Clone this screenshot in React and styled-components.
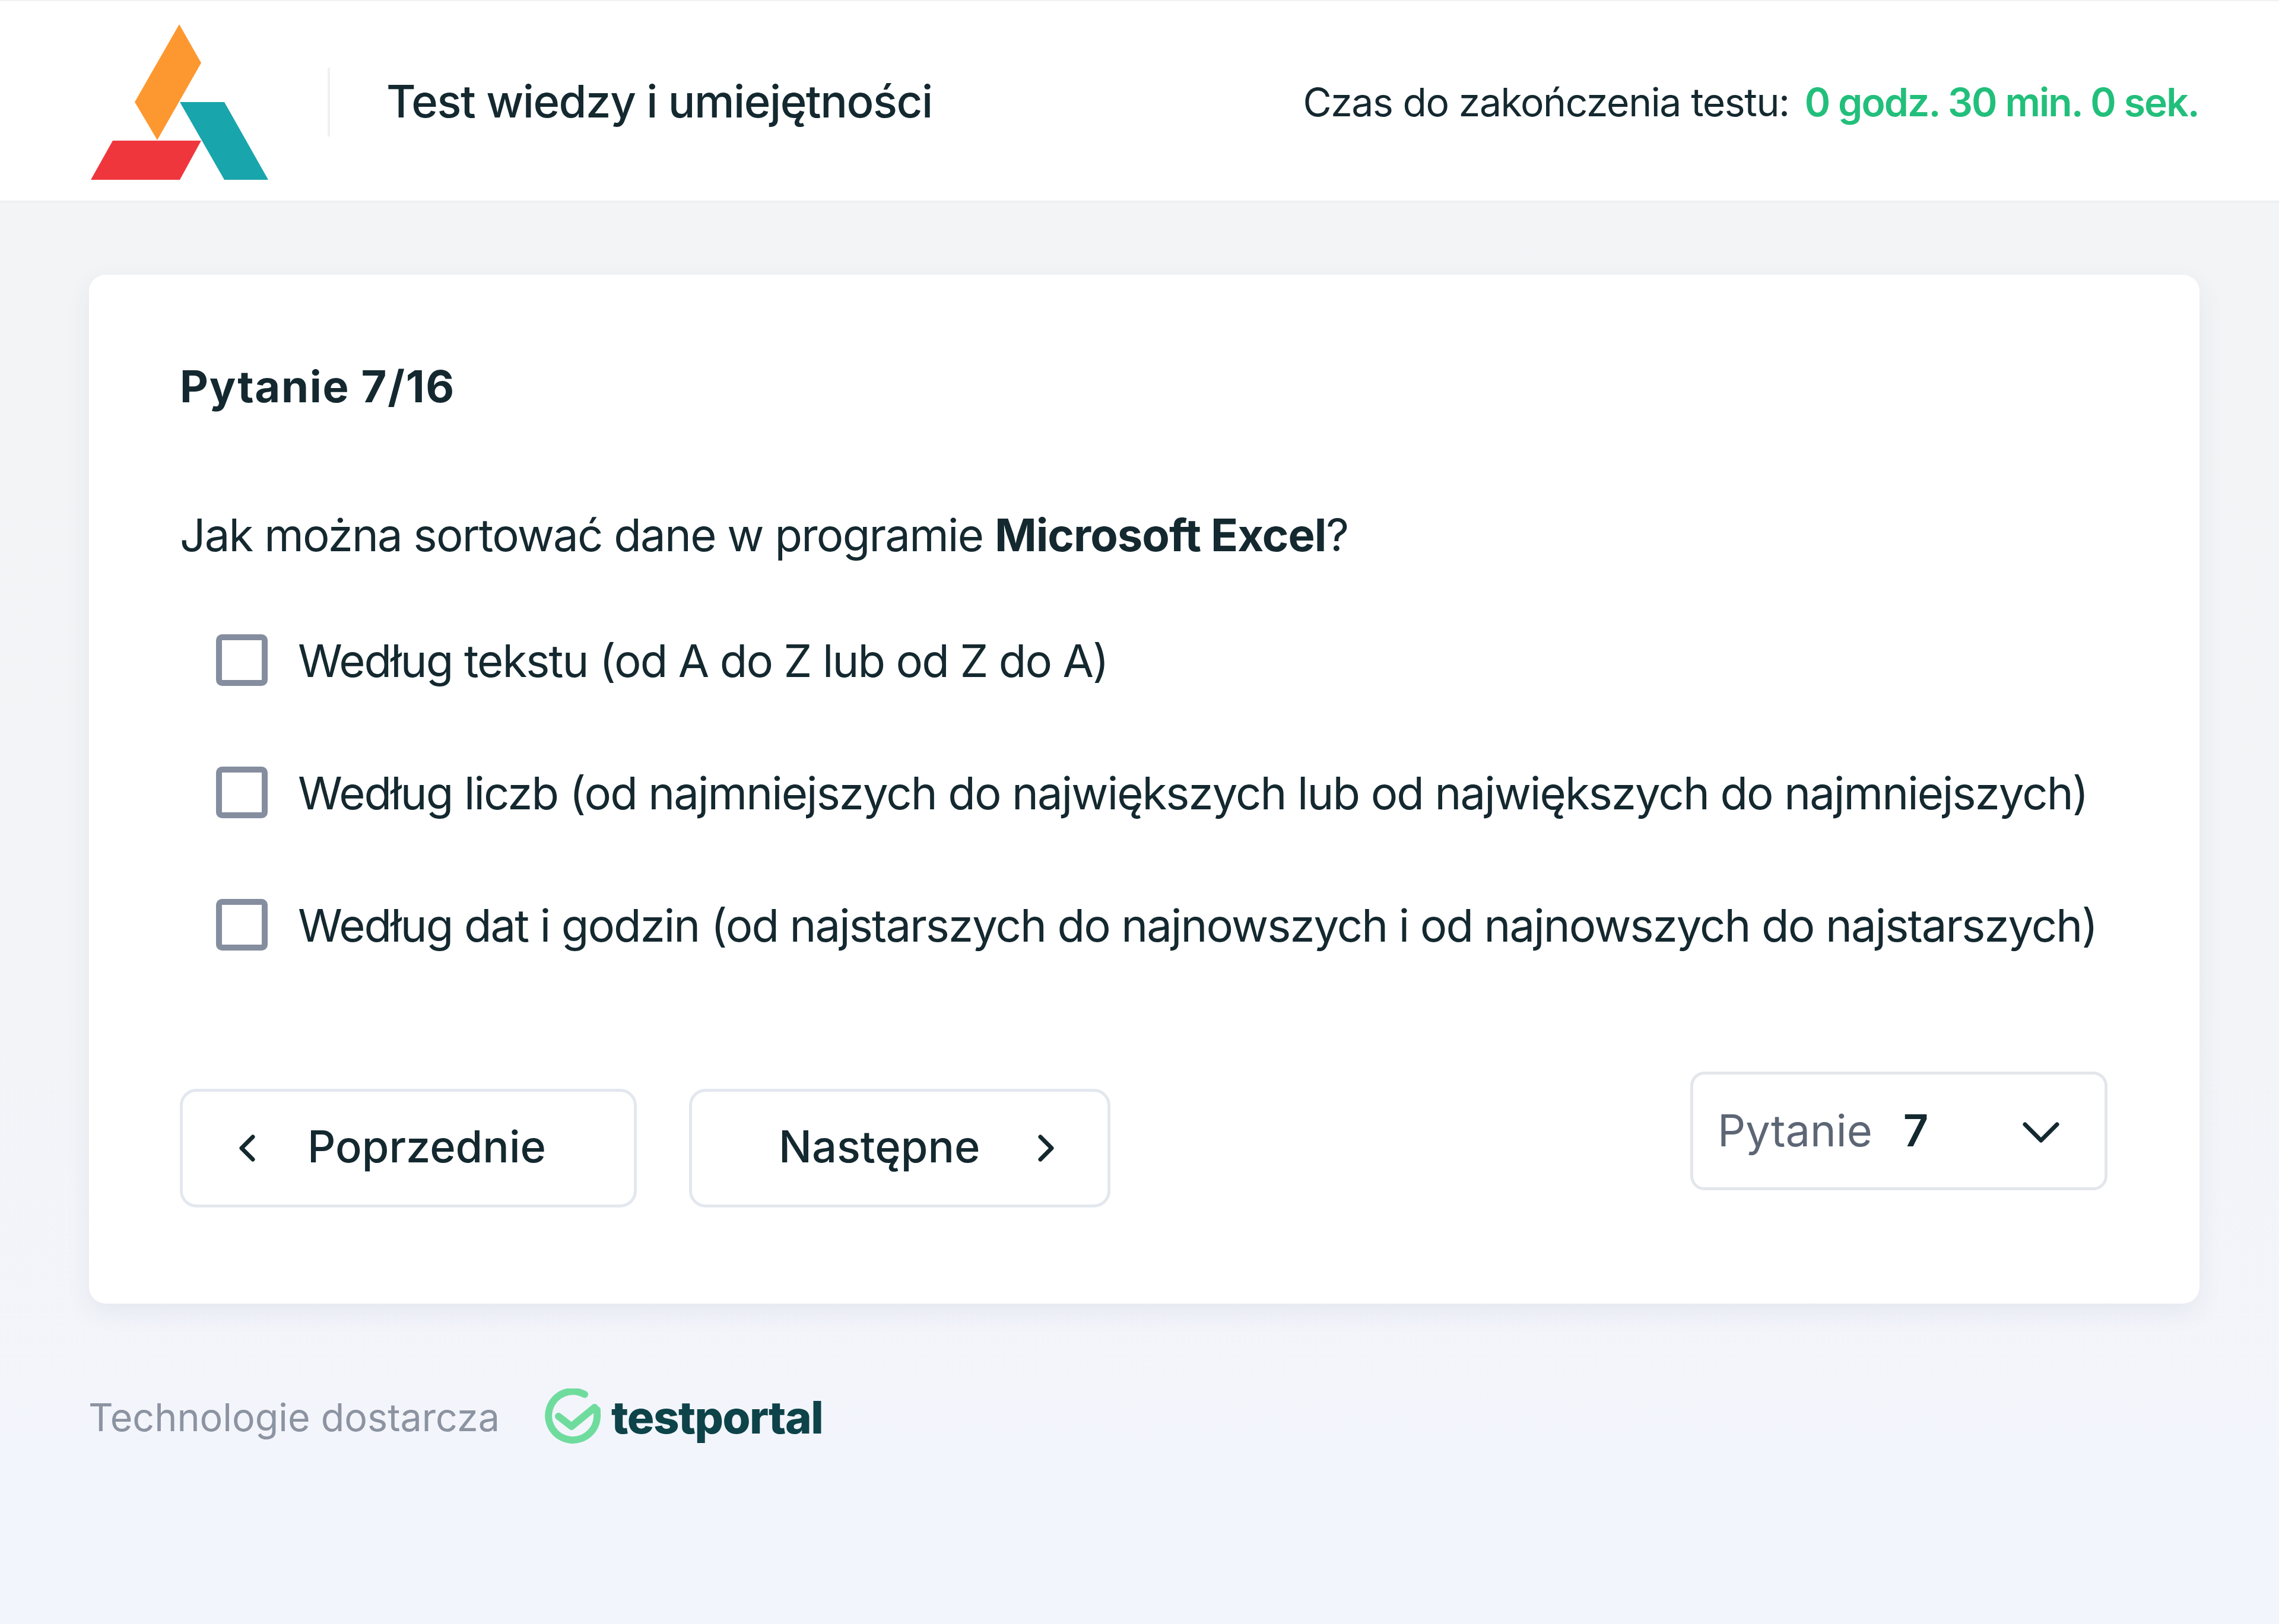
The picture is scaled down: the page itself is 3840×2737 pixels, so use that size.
import React from 'react';
import styled, { createGlobalStyle } from 'styled-components';

const GlobalStyle = createGlobalStyle`
  html, body {
    margin: 0;
    padding: 0;
  }
  body {
    font-family: "Inter", "Liberation Sans", sans-serif;
    color: #14282f;
  }
  * {
    box-sizing: border-box;
  }
`;

const Page = styled.div`
  min-height: 2737px;
  background: linear-gradient(to bottom, #f3f4f6 0%, #f3f4f7 60%, #f3f5fc 90%);
`;

const Header = styled.header`
  height: 342px;
  display: flex;
  align-items: center;
  justify-content: space-between;
  padding: 0 135px 0 152px;
  background: #ffffff;
  border-top: 2px solid #f1f2f4;
  border-bottom: 4px solid #eef0f3;
`;

const Brand = styled.div`
  display: flex;
  align-items: center;
`;

const BrandMark = styled.svg`
  margin-top: 3px;
`;

const Divider = styled.div`
  width: 4px;
  height: 116px;
  margin: 3px 95px 0 100px;
  background: #eef0f2;
`;

const Title = styled.h1`
  margin: 0;
  font-size: 76px;
  line-height: 100px;
  font-weight: 500;
  letter-spacing: -1.45px;
  white-space: nowrap;
`;

const Timer = styled.div`
  display: flex;
  gap: 26px;
  margin-top: 4px;
  font-size: 66px;
  line-height: 100px;
  letter-spacing: -1.4px;
  white-space: nowrap;
`;

const TimeLeft = styled.span`
  color: #22bf7b;
  font-weight: 600;
  letter-spacing: -1.9px;
`;

const Card = styled.main`
  width: 3556px;
  margin: 121px 0 0 150px;
  padding: 138px 155px 162px 153px;
  background: #ffffff;
  border-radius: 28px;
  box-shadow: 0 14px 44px rgba(40, 60, 90, 0.07);
`;

const Heading = styled.h2`
  margin: 0;
  font-size: 74px;
  line-height: 100px;
  font-weight: 700;
  letter-spacing: 1.7px;
`;

const Question = styled.p`
  margin: 150px 0 50px;
  font-size: 76px;
  line-height: 100px;
  font-weight: 400;
  letter-spacing: -1.75px;
  white-space: nowrap;

  strong {
    font-weight: 700;
    letter-spacing: -1px;
  }
`;

const Option = styled.label`
  height: 223px;
  display: flex;
  align-items: center;
  gap: 51px;
  padding-left: 61px;
  font-size: 76px;
  letter-spacing: -1.9px;
  white-space: nowrap;
`;

const Checkbox = styled.span`
  flex: none;
  width: 87px;
  height: 87px;
  border: 10px solid #858e9f;
  border-radius: 10px;
  background: #ffffff;
`;

const Controls = styled.div`
  display: flex;
  justify-content: space-between;
  align-items: flex-start;
  margin-top: 136px;
`;

const NavGroup = styled.div`
  display: flex;
  gap: 88px;
  margin-top: 29px;
`;

const NavButton = styled.button`
  width: ${(p) => p.$width}px;
  height: 200px;
  display: flex;
  align-items: center;
  justify-content: space-between;
  padding: ${(p) => p.$padding};
  background: #ffffff;
  border: 5px solid #e3e7ee;
  border-radius: 28px;
  font-family: inherit;
  font-size: 74px;
  font-weight: 500;
  color: #14282f;
`;

const ButtonText = styled.span`
  margin-bottom: 6px;
`;

const Select = styled.div`
  width: 703px;
  height: 200px;
  display: flex;
  align-items: center;
  padding: 0 76px 0 41px;
  border: 5px solid #e3e6ea;
  border-radius: 24px;
  font-size: 74px;
`;

const SelectLabel = styled.span`
  margin-bottom: 3px;
  color: #5d6675;
`;

const SelectValue = styled.span`
  margin: 0 0 3px 52px;
  font-weight: 600;
  flex: 1;
`;

const SelectArrow = styled.svg`
  margin-top: 6px;
`;

const Footer = styled.footer`
  height: 100px;
  display: flex;
  align-items: center;
  margin: 141px 0 0 149px;
`;

const FooterLabel = styled.span`
  font-size: 64.6px;
  color: #8c93a1;
  white-space: nowrap;
`;

const PortalLogo = styled.div`
  display: flex;
  align-items: center;
  gap: 16px;
  margin-left: 75px;
`;

const PortalName = styled.span`
  font-size: 76px;
  font-weight: 800;
  letter-spacing: -1.5px;
  color: #0d4349;
`;

const Chevron = ({ d, w, h, as: Tag = 'svg' }) => (
  <Tag width={w} height={h} viewBox={`0 0 ${w} ${h}`} fill="none" stroke="#14282f" strokeWidth="7" strokeLinecap="round" strokeLinejoin="round">
    <path d={d} />
  </Tag>
);

const options = [
  'Według tekstu (od A do Z lub od Z do A)',
  'Według liczb (od najmniejszych do największych lub od największych do najmniejszych)',
  'Według dat i godzin (od najstarszych do najnowszych i od najnowszych do najstarszych)',
];

export default function App() {
  return (
    <Page>
      <GlobalStyle />
      <Header>
        <Brand>
          <BrandMark width="300" height="264" viewBox="152 40 300 264">
            <polygon points="302,41 339,106 265,236 227,172" fill="#fd9830" />
            <polygon points="303,172 378,172 452,303 378,303" fill="#19a5ac" />
            <polygon points="190,237 339,237 303,303 153,303" fill="#f0363d" />
          </BrandMark>
          <Divider />
          <Title>Test wiedzy i umiejętności</Title>
        </Brand>
        <Timer>
          <span>Czas do zakończenia testu:</span>
          <TimeLeft>0 godz. 30 min. 0 sek.</TimeLeft>
        </Timer>
      </Header>
      <Card>
        <Heading>Pytanie 7/16</Heading>
        <Question>
          Jak można sortować dane w programie <strong>Microsoft Excel</strong>?
        </Question>
        {options.map((text) => (
          <Option key={text}>
            <Checkbox />
            {text}
          </Option>
        ))}
        <Controls>
          <NavGroup>
            <NavButton $width={770} $padding="0 148px 0 93px">
              <Chevron w={30} h={48} d="M25 5 L6 24 L25 43" />
              <ButtonText>Poprzednie</ButtonText>
            </NavButton>
            <NavButton $width={710} $padding="0 88px 0 146px">
              <ButtonText>Następne</ButtonText>
              <Chevron w={30} h={48} d="M5 5 L24 24 L5 43" />
            </NavButton>
          </NavGroup>
          <Select>
            <SelectLabel>Pytanie</SelectLabel>
            <SelectValue>7</SelectValue>
            <Chevron as={SelectArrow} w={62} h={36} d="M4 4 L31 31 L58 4" />
          </Select>
        </Controls>
      </Card>
      <Footer>
        <FooterLabel>Technologie dostarcza</FooterLabel>
        <PortalLogo>
          <svg width="97" height="96" viewBox="0 0 97 96" fill="none" stroke="#6fdc9e" strokeWidth="12" strokeLinecap="round" strokeLinejoin="round">
            <path d="M68 10 A 41 41 0 1 0 89 42 L 89 36" />
            <path d="M24 47 L46 64 L85 32" />
          </svg>
          <PortalName>testportal</PortalName>
        </PortalLogo>
      </Footer>
    </Page>
  );
}
